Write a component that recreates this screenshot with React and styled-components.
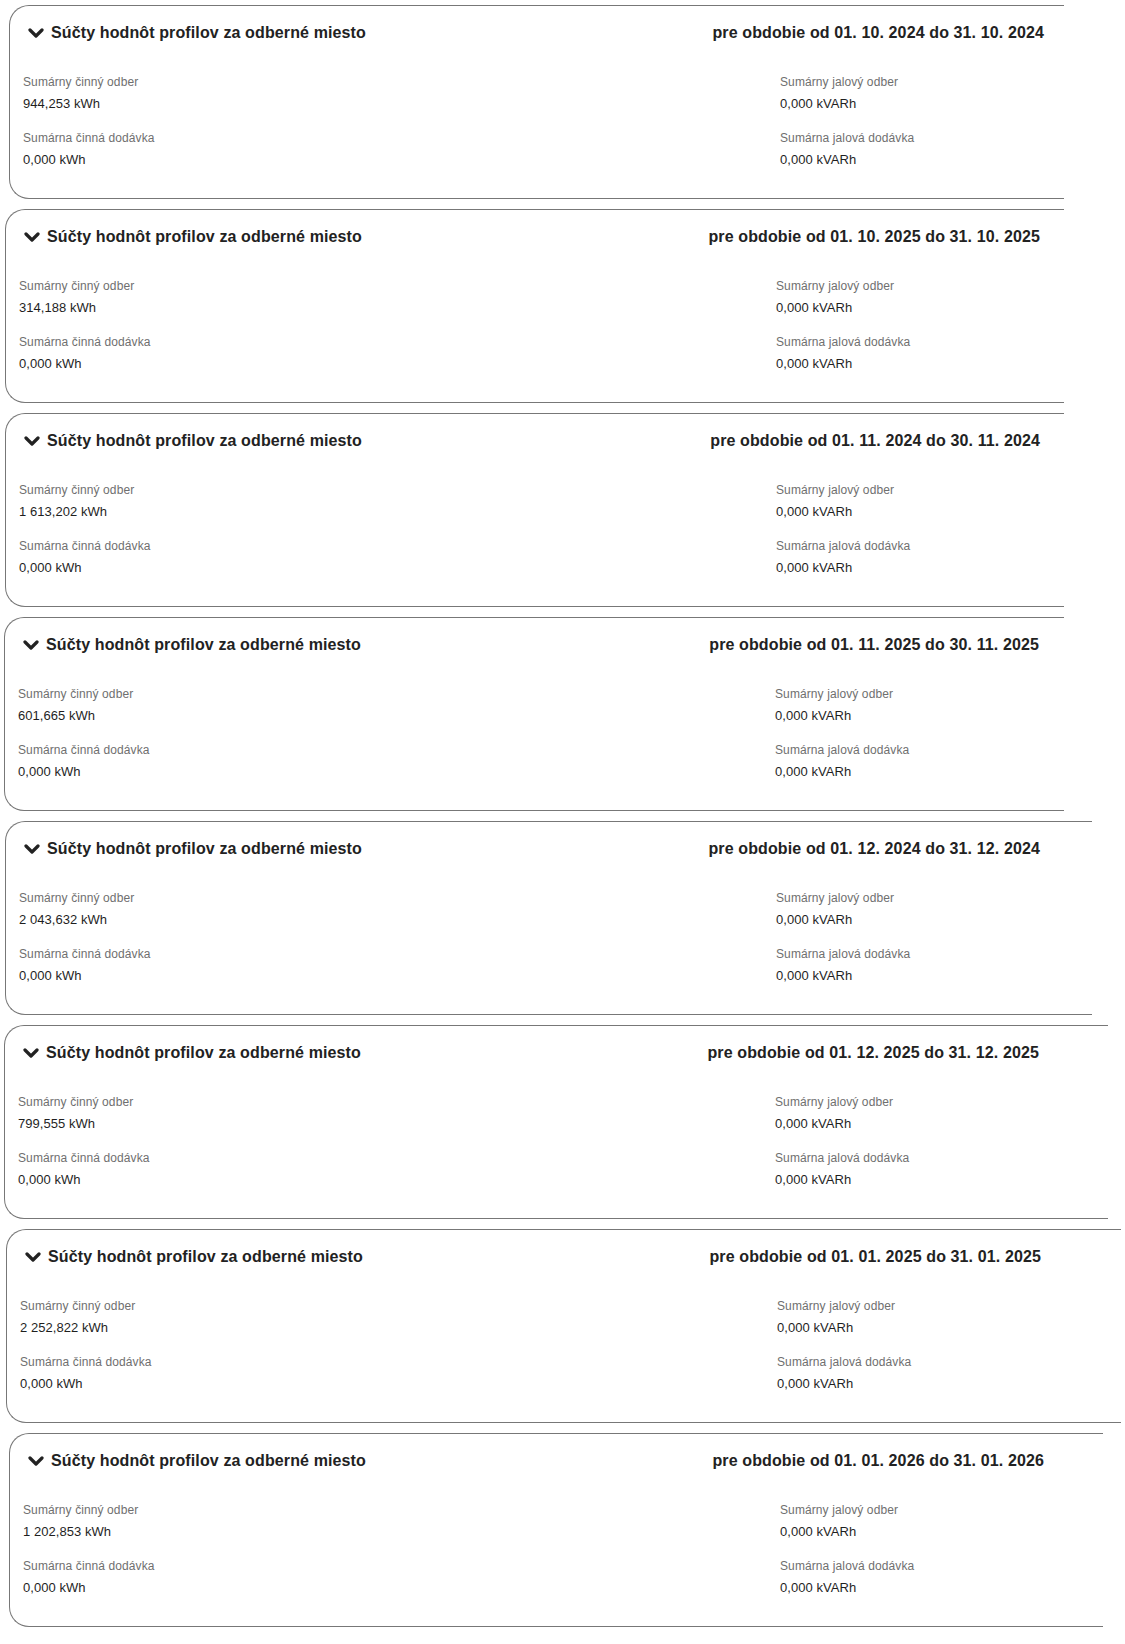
import React from 'react';
import styled, { createGlobalStyle } from 'styled-components';

const GlobalStyle = createGlobalStyle`
  html, body {
    margin: 0;
    padding: 0;
    background: #fff;
  }

  body {
    font-family: "Liberation Sans", Arial, sans-serif;
    color: #222;
  }
`;

const Page = styled.div`
  display: flex;
  flex-direction: column;
  gap: 10px;
  padding-top: 5px;
  width: 1125px;
  overflow: hidden;
`;

const Card = styled.section`
  box-sizing: border-box;
  height: 194px;
  width: ${(props) => props.width}px;
  margin-left: ${(props) => props.left}px;
  border: 1px solid #777;
  border-right: none;
  border-radius: 20px 0 0 20px;
  padding: 17px 0 0 13px;
  overflow: hidden;
`;

const Header = styled.div`
  display: flex;
  align-items: center;
  justify-content: space-between;
  width: 1021px;
  height: 20px;
`;

const Toggle = styled.div`
  display: flex;
  align-items: center;
  gap: 7px;
  padding-left: 5px;
`;

const Title = styled.h3`
  margin: 0;
  font-size: 16px;
  line-height: 20px;
  font-weight: 700;
  letter-spacing: 0.12px;
  color: #222;
  white-space: nowrap;
`;

const Fields = styled.div`
  display: grid;
  grid-template-columns: 757px 1fr;
  row-gap: 18px;
  margin-top: 31px;
`;

const Field = styled.div`
  display: flex;
  flex-direction: column;
  gap: 6px;
`;

Field.Label = styled.span`
  font-size: 12px;
  line-height: 16px;
  letter-spacing: 0.1px;
  color: #6f6f6f;
`;

Field.Value = styled.span`
  font-size: 13px;
  line-height: 16px;
  letter-spacing: 0.05px;
  color: #1f1f1f;
`;

function Chevron() {
  return (
    <svg width="16" height="12" viewBox="0 0 16 12" aria-hidden="true">
      <polyline points="2,3 8,9 14,3" fill="none" stroke="#222" strokeWidth="3.2" strokeLinecap="round" strokeLinejoin="round" />
    </svg>
  );
}

const periods = [
  { left: 9, right: 1064, from: '01. 10. 2024', to: '31. 10. 2024', odber: '944,253' },
  { left: 5, right: 1064, from: '01. 10. 2025', to: '31. 10. 2025', odber: '314,188' },
  { left: 5, right: 1064, from: '01. 11. 2024', to: '30. 11. 2024', odber: '1 613,202' },
  { left: 4, right: 1064, from: '01. 11. 2025', to: '30. 11. 2025', odber: '601,665' },
  { left: 5, right: 1092, from: '01. 12. 2024', to: '31. 12. 2024', odber: '2 043,632' },
  { left: 4, right: 1108, from: '01. 12. 2025', to: '31. 12. 2025', odber: '799,555' },
  { left: 6, right: 1121, from: '01. 01. 2025', to: '31. 01. 2025', odber: '2 252,822' },
  { left: 9, right: 1103, from: '01. 01. 2026', to: '31. 01. 2026', odber: '1 202,853' },
];

function ProfileSum({ period }) {
  return (
    <Card left={period.left} width={period.right - period.left}>
      <Header>
        <Toggle>
          <Chevron />
          <Title>Súčty hodnôt profilov za odberné miesto</Title>
        </Toggle>
        <Title>{`pre obdobie od ${period.from} do ${period.to}`}</Title>
      </Header>
      <Fields>
        <Field>
          <Field.Label>Sumárny činný odber</Field.Label>
          <Field.Value>{`${period.odber} kWh`}</Field.Value>
        </Field>
        <Field>
          <Field.Label>Sumárny jalový odber</Field.Label>
          <Field.Value>0,000 kVARh</Field.Value>
        </Field>
        <Field>
          <Field.Label>Sumárna činná dodávka</Field.Label>
          <Field.Value>0,000 kWh</Field.Value>
        </Field>
        <Field>
          <Field.Label>Sumárna jalová dodávka</Field.Label>
          <Field.Value>0,000 kVARh</Field.Value>
        </Field>
      </Fields>
    </Card>
  );
}

export default function App() {
  return (
    <>
      <GlobalStyle />
      <Page>
        {periods.map((period) => (
          <ProfileSum key={period.from} period={period} />
        ))}
      </Page>
    </>
  );
}
